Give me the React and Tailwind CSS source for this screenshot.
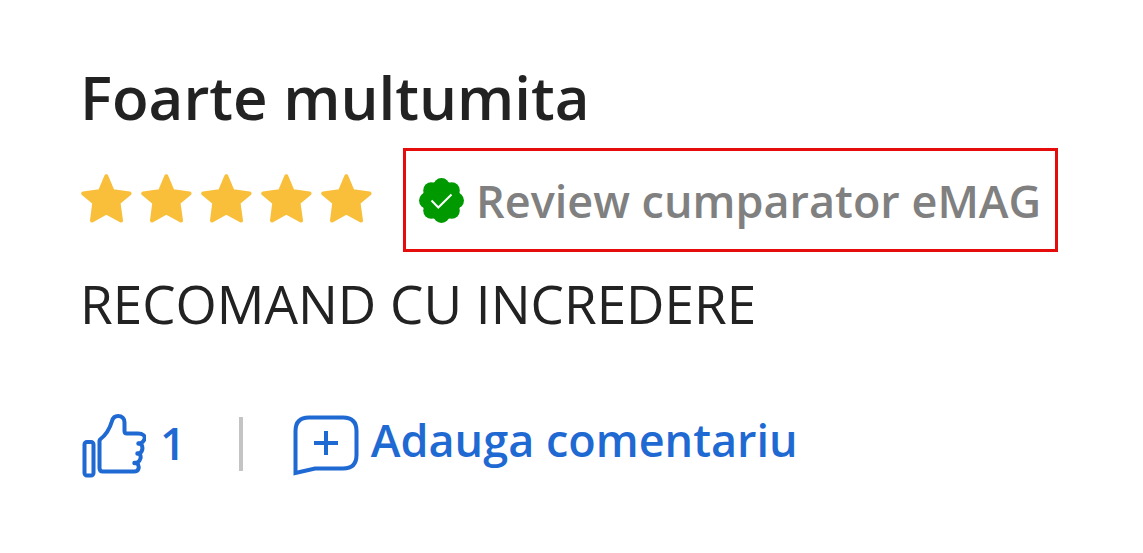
function Star() {
  return (
    <svg viewBox="0 0 52 52" className="size-[52px]" fill="#f9bf3b" stroke="#f9bf3b" strokeWidth="4" strokeLinejoin="round" aria-hidden="true">
      <path d="M26.300 2.200L32.300 16.600Q32.600 17.300 33.400 17.300L49.500 19.500L39 28.300Q38.500 28.800 38.600 29.500L41 46.500L26.300 38.500L12 46.500L14.200 29.500Q14.200 28.800 13.700 28.300L3.200 19.500L19.200 17.300Q20 17.300 20.300 16.600Z" />
    </svg>
  );
}

function VerifiedBadge() {
  return (
    <svg viewBox="0 0 46 46" className="size-[46px]" aria-hidden="true">
      <g fill="#090">
        <circle cx="23.500" cy="23.500" r="19.500" />
        <circle cx="23.500" cy="9.200" r="8.200" />
        <circle cx="33.600" cy="13.400" r="8.200" />
        <circle cx="37.800" cy="23.500" r="8.200" />
        <circle cx="33.600" cy="33.600" r="8.200" />
        <circle cx="23.500" cy="37.800" r="8.200" />
        <circle cx="13.400" cy="33.600" r="8.200" />
        <circle cx="9.200" cy="23.500" r="8.200" />
        <circle cx="13.400" cy="13.400" r="8.200" />
      </g>
      <path d="M13.500 23.500l6.800 7L33.500 17.500" fill="none" stroke="#fff" strokeWidth="2" />
    </svg>
  );
}

function ThumbUp() {
  return (
    <svg viewBox="0 0 66 66" className="size-[66px]" fill="none" stroke="#1f69d2" strokeWidth="4" strokeLinejoin="round" strokeLinecap="round" aria-hidden="true">
      <rect x="4.500" y="29" width="9" height="33.500" rx="2.500" />
      <path d="M20 26.500C26 22 30 15 32 8C33 4.500 35 3 38 3C42 3 44.500 5.500 44.500 9.500V18Q44.500 20.500 47 20.500H58C63 20.500 65.500 23 64.500 26C64 28.500 62 29.500 60.500 30.500C63 33 63.500 37.500 59.500 40.500C61.500 43.500 61 47.500 57 50C60 53.500 59 58.500 54 58.500H23Q19.500 58.500 19.500 55V28Z" />
      <path d="M58.500 30.500H61M57.500 40.500H60M54.500 50H57.500" strokeWidth="4.500" />
    </svg>
  );
}

function CommentPlus() {
  return (
    <svg viewBox="0 0 66 66" className="size-[66px]" fill="none" stroke="#1f69d2" strokeWidth="4" aria-hidden="true">
      <path d="M2.500 18Q2.500 4.500 16 4.500H50Q63.500 4.500 63.500 18V42Q63.500 55.500 50 55.500H22L2.500 60Z" />
      <path d="M21 30H45M33 18V42" />
    </svg>
  );
}

export default function App() {
  return (
    <main className="min-h-screen bg-white px-20 pt-14 pb-16 font-['Open_Sans',sans-serif] text-[#222]">
      <article>
        <h1 className="text-[60px] leading-[82px] font-semibold">Foarte multumita</h1>
        <div className="mt-[10px] flex items-center gap-[31px] whitespace-nowrap">
          <div className="flex gap-2" role="img" aria-label="5 / 5">
            <Star /><Star /><Star /><Star /><Star />
          </div>
          <div className="flex h-[104px] items-center gap-3 border-3 border-[#e60c0c] pr-3.5 pl-3 text-[45px] font-semibold text-[#808080]">
            <VerifiedBadge />
            <span className="pt-0.5">Review cumparator eMAG</span>
          </div>
        </div>
        <p className="mt-4 text-[53px] leading-[72px]">RECOMAND CU INCREDERE</p>
      </article>
      <div className="mt-[70px] flex items-center text-[45px] leading-[60px] font-semibold text-[#1f69d2]">
        <button className="flex items-center gap-3.5">
          <ThumbUp />
          <span className="pb-1.5">1</span>
        </button>
        <div className="mr-[50px] ml-[53px] flex h-[66px] items-center pb-1">
          <div className="h-[54px] w-1 bg-[#c4c4c4]" />
        </div>
        <button className="flex items-center gap-3">
          <CommentPlus />
          <span className="pb-3">Adauga comentariu</span>
        </button>
      </div>
    </main>
  );
}
